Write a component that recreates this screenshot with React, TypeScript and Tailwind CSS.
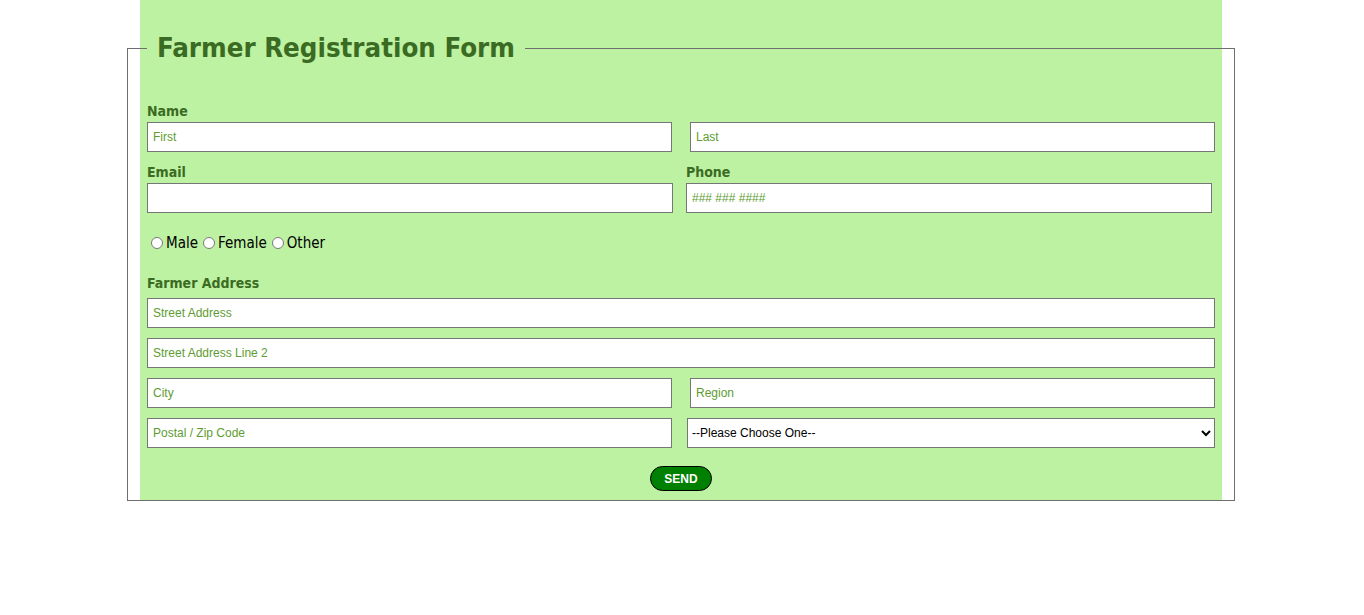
import React from "react";

const inputCls =
  "block h-[30px] border border-[#767676] bg-white px-[5px] text-[12px] text-black placeholder:text-[#5e9c30] outline-none";

export default function App() {
  const label = "block h-[18px] leading-[18px] text-[14px] font-bold text-[#3b6b22]";
  return (
    <div className="min-h-[615px] bg-white" style={{ fontFamily: '"DejaVu Sans Condensed", "DejaVu Sans", sans-serif' }}>
      <div className="ml-[140px] h-[500px] w-[1082px] bg-[#bdf2a2] pt-[31px]">
        <fieldset className="-ml-[13px] w-[1108px] border border-[#6f6f6f] px-[19px] pb-[9px] pt-[37px]">
          <legend className="px-[10px] text-[27.4px] font-bold leading-[34px] text-[#3b6b22]">Farmer Registration Form</legend>

          <span className={label + " mb-[2px]"}>Name</span>
          <div className="flex gap-[18px]" style={{ fontFamily: '"Liberation Sans", Arial, sans-serif' }}>
            <input className={inputCls + " w-[525px]"} placeholder="First" />
            <input className={inputCls + " w-[525px]"} placeholder="Last" />
          </div>

          <div className="mt-[11px] flex gap-[13px]">
            <div className="w-[526px]">
              <span className={label + " mb-[2px]"}>Email</span>
              <input className={inputCls + " w-[526px]"} style={{ fontFamily: '"Liberation Sans", Arial, sans-serif' }} />
            </div>
            <div className="w-[526px]">
              <span className={label + " mb-[2px]"}>Phone</span>
              <input className={inputCls + " w-[526px]"} style={{ fontFamily: '"Liberation Sans", Arial, sans-serif' }} placeholder="### ### ####" />
            </div>
          </div>

          <div className="mt-[21px] flex h-[18px] items-center text-[15px] leading-[18px] text-black">
            <input type="radio" name="g" className="ml-[4px] mr-[3px] h-[12px] w-[12px]" />
            <span>Male</span>
            <input type="radio" name="g" className="ml-[5px] mr-[3px] h-[12px] w-[12px]" />
            <span>Female</span>
            <input type="radio" name="g" className="ml-[5px] mr-[3px] h-[12px] w-[12px]" />
            <span>Other</span>
          </div>

          <span className={label + " mt-[22px] mb-[6px]"}>Farmer Address</span>
          <div className="flex flex-col gap-[10px]" style={{ fontFamily: '"Liberation Sans", Arial, sans-serif' }}>
            <input className={inputCls + " w-[1068px]"} placeholder="Street Address" />
            <input className={inputCls + " w-[1068px]"} placeholder="Street Address Line 2" />
            <div className="flex gap-[18px]">
              <input className={inputCls + " w-[525px]"} placeholder="City" />
              <input className={inputCls + " w-[525px]"} placeholder="Region" />
            </div>
            <div className="flex gap-[15px]">
              <input className={inputCls + " w-[525px]"} placeholder="Postal / Zip Code" />
              <select className="h-[30px] w-[528px] border border-[#767676] bg-white px-0 text-[12px] text-black outline-none">
                <option>--Please Choose One--</option>
              </select>
            </div>
          </div>

          <div className="mt-[18px] flex justify-center">
            <button
              className="h-[25px] w-[62px] rounded-full border border-black bg-[#008000] text-[12px] font-bold text-white"
              style={{ fontFamily: '"Liberation Sans", Arial, sans-serif' }}
            >
              SEND
            </button>
          </div>
        </fieldset>
      </div>
    </div>
  );
}
